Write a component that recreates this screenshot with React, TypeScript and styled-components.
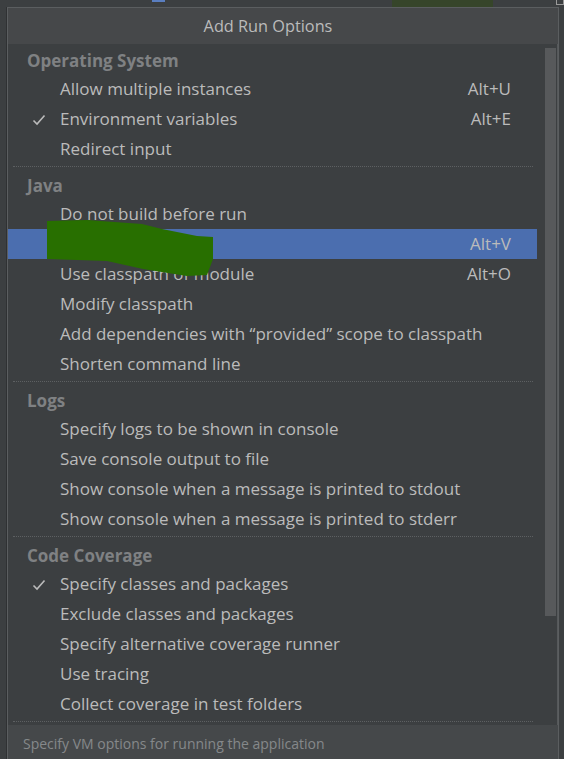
import React, { FC } from 'react';
import styled, { createGlobalStyle } from 'styled-components';

const Global = createGlobalStyle`
  html, body {
    margin: 0;
    padding: 0;
    background: #3c3f41;
    overflow: hidden;
  }
  body {
    font-family: "Open Sans", "Noto Sans", sans-serif;
  }
`

interface Item {
    label: string
    shortcut?: string
    checked?: boolean
    selected?: boolean
}

interface Section {
    title: string
    items: Array<Item>
}

const sections: Array<Section> = [
    {
        title: 'Operating System',
        items: [
            { label: 'Allow multiple instances', shortcut: 'Alt+U' },
            { label: 'Environment variables', shortcut: 'Alt+E', checked: true },
            { label: 'Redirect input' },
        ],
    },
    {
        title: 'Java',
        items: [
            { label: 'Do not build before run' },
            { label: '', shortcut: 'Alt+V', selected: true },
            { label: 'Use classpath of module', shortcut: 'Alt+O' },
            { label: 'Modify classpath' },
            { label: 'Add dependencies with \u201cprovided\u201d scope to classpath' },
            { label: 'Shorten command line' },
        ],
    },
    {
        title: 'Logs',
        items: [
            { label: 'Specify logs to be shown in console' },
            { label: 'Save console output to file' },
            { label: 'Show console when a message is printed to stdout' },
            { label: 'Show console when a message is printed to stderr' },
        ],
    },
    {
        title: 'Code Coverage',
        items: [
            { label: 'Specify classes and packages', checked: true },
            { label: 'Exclude classes and packages' },
            { label: 'Specify alternative coverage runner' },
            { label: 'Use tracing' },
            { label: 'Collect coverage in test folders' },
        ],
    },
]

const Check: FC = () => (
    <svg width="14" height="12" viewBox="0 0 14 12">
        <polyline points="1.5,6.5 5,10 12.5,1.5" fill="none" stroke="#bbbbbb" strokeWidth="1.6" />
    </svg>
)

// the green scribble covering the selected entry
const Scribble: FC = () => (
    <ScribbleSvg width="170" height="62" viewBox="0 0 170 62">
        <polygon
            points="0,2 40,1 95,5 115,10 150,17 166,18 166,40 160,56 140,57 96,50 60,42 0,40"
            fill="#286f00"
        />
    </ScribbleSvg>
)

const App: FC = () => (
    <>
        <Global />
        <Screen>
            <TopStrip>
                <BlueIcon />
                <GreenBlock />
                <CornerIcon />
            </TopStrip>
            <Middle>
                <SideStrip />
                <Popup>
                    <Title>Add Run Options</Title>
                    <Body>
                        <List>
                            {sections.map((s, i) => (
                                <React.Fragment key={s.title}>
                                    {i > 0 && <Separator />}
                                    <Header>{s.title}</Header>
                                    {s.items.map((it, j) => (
                                        <Row key={j} selected={it.selected}>
                                            <CheckCell>{it.checked && <Check />}</CheckCell>
                                            <Label>{it.label}</Label>
                                            {it.shortcut && <Shortcut>{it.shortcut}</Shortcut>}
                                        </Row>
                                    ))}
                                </React.Fragment>
                            ))}
                            <Separator />
                            <Scribble />
                        </List>
                        <ScrollTrack>
                            <Thumb />
                        </ScrollTrack>
                    </Body>
                    <Footer>Specify VM options for running the application</Footer>
                </Popup>
                <RightStrip />
            </Middle>
        </Screen>
    </>
)
export default App


const Screen = styled.div`
    width: 564px;
    height: 759px;
    display: flex;
    flex-direction: column;
    background: #3c3f41;
    overflow: hidden;
`

const TopStrip = styled.div`
    height: 7px;
    position: relative;
    background: #3c3f41;
    display: flex;
    align-items: flex-start;
`

const BlueIcon = styled.div`
    margin-left: 152px;
    width: 14px;
    height: 2px;
    background: #5a7ec0;
`

const GreenBlock = styled.div`
    margin-left: 227px;
    width: 108px;
    height: 7px;
    background: #36452a;
`

const CornerIcon = styled.div`
    margin-left: 63px;
    width: 6px;
    height: 4px;
    border: 1px solid #9a9a9a;
    border-top: 0;
`

const Middle = styled.div`
    flex: 1;
    display: flex;
    min-height: 0;
`

const SideStrip = styled.div`
    width: 6px;
    background: #3c3f41;
    border-right: 1px solid #2f3133;
`

const RightStrip = styled.div`
    flex: 1;
    background: #3c3f41;
`

const Popup = styled.div`
    width: 552px;
    height: 760px;
    border: 1px solid #5b5e60;
    border-bottom: 0;
    display: flex;
    flex-direction: column;
    background: #3c3f41;
    box-sizing: border-box;
`

const Title = styled.div`
    height: 36px;
    flex: none;
    background: #46484a;
    color: #bbbbbb;
    font-size: 16.3px;
    display: flex;
    align-items: center;
    justify-content: center;
    padding-right: 30px;
`

const Body = styled.div`
    flex: 1;
    min-height: 0;
    display: flex;
    overflow: hidden;
`

const List = styled.div`
    position: relative;
    flex: 1;
    min-width: 0;
    display: flex;
    flex-direction: column;
    padding-top: 1px;
`

const Header = styled.div`
    height: 29px;
    flex: none;
    display: flex;
    align-items: center;
    padding-left: 19px;
    padding-top: 2px;
    box-sizing: border-box;
    font-size: 17px;
    font-weight: 700;
    color: #7f8183;
`

const Row = styled.div<{ selected?: boolean }>`
    height: 30px;
    flex: none;
    display: flex;
    align-items: center;
    box-sizing: border-box;
    padding-right: 26px;
    padding-bottom: 1px;
    margin-right: 8px;
    background: ${props => props.selected ? '#4b6eaf' : 'transparent'};
    color: #bbbbbb;
    font-size: 17px;
`

const CheckCell = styled.div`
    width: 52px;
    flex: none;
    display: flex;
    justify-content: flex-end;
    padding-right: 14px;
    box-sizing: border-box;
    padding-top: 2px;
`

const Label = styled.span`
    flex: 1;
    white-space: nowrap;
`

const Shortcut = styled.span`
    white-space: nowrap;
`

const Separator = styled.div`
    height: 6px;
    flex: none;
    margin: 0 12px 0 5px;
    position: relative;
    &::after {
        content: '';
        position: absolute;
        left: 0;
        right: 0;
        top: 2px;
        border-top: 1px dotted #5d6062;
    }
`

const ScribbleSvg = styled.svg`
    position: absolute;
    left: 39px;
    top: 175px;
`

const ScrollTrack = styled.div`
    width: 13px;
    flex: none;
    padding-top: 4px;
    box-sizing: border-box;
    border-right: 1px solid #56595b;
`

const Thumb = styled.div`
    width: 11px;
    height: 568px;
    background: #57595b;
`

const Footer = styled.div`
    height: 36px;
    flex: none;
    background: #45484a;
    color: #85888a;
    font-size: 14px;
    display: flex;
    align-items: center;
    padding-left: 15px;
    padding-bottom: 6px;
`
